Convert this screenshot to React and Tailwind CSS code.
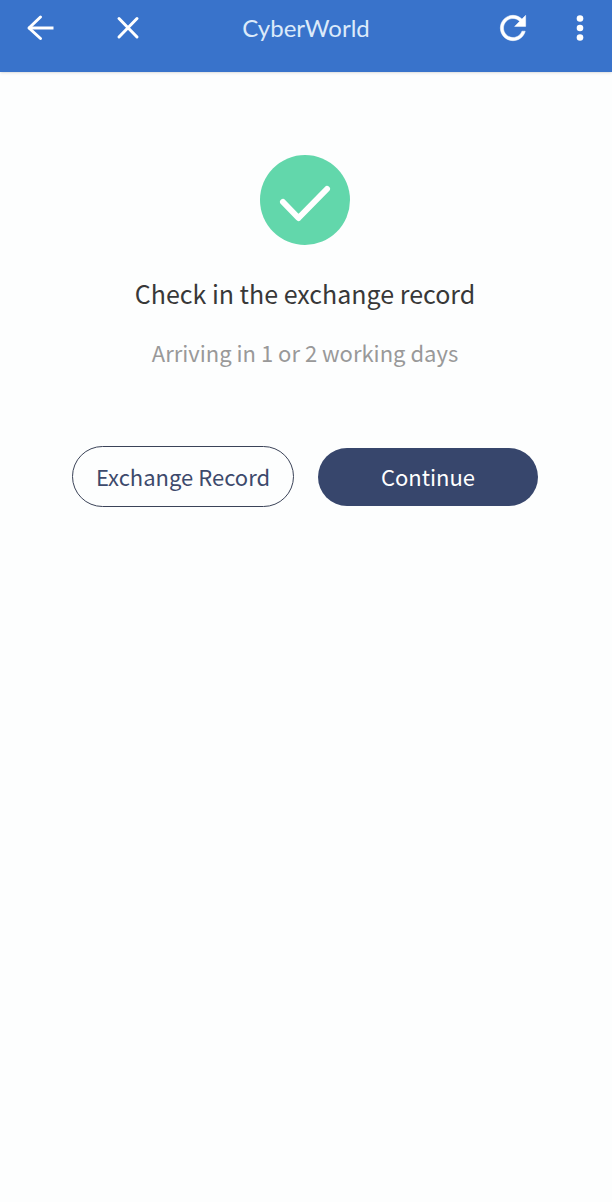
function BackIcon() {
  return (
    <svg viewBox="0 0 40 40" className="size-10" fill="none" stroke="currentColor" strokeWidth="3" strokeLinecap="round" strokeLinejoin="round" aria-hidden="true">
      <path d="M20.500 9L9 20l11.500 10.500" />
      <path d="M10 20h22" strokeLinecap="square" />
    </svg>
  );
}

function CloseIcon() {
  return (
    <svg viewBox="0 0 40 40" className="size-10" fill="none" stroke="currentColor" strokeWidth="3" strokeLinecap="round" aria-hidden="true">
      <path d="M11 10.500l18 18.500M29 10.500L11 29" />
    </svg>
  );
}

function RefreshIcon() {
  return (
    <svg viewBox="0 0 24 24" className="size-[38px]" fill="currentColor" aria-hidden="true">
      <path d="M17.650 6.350C16.200 4.900 14.210 4 12 4c-4.420 0-7.990 3.580-7.990 8s3.570 8 7.990 8c3.730 0 6.840-2.550 7.730-6h-2.080c-.82 2.330-3.040 4-5.650 4-3.310 0-6-2.690-6-6s2.690-6 6-6c1.660 0 3.140.69 4.220 1.780L13 11h7V4l-2.350 2.350z" stroke="currentColor" strokeWidth=".3" />
    </svg>
  );
}

function MoreIcon() {
  return (
    <svg viewBox="0 0 40 40" className="size-10" fill="currentColor" aria-hidden="true">
      <circle cx="20" cy="10.500" r="3.300" />
      <circle cx="20" cy="20" r="3.300" />
      <circle cx="20" cy="29.500" r="3.300" />
    </svg>
  );
}

function Header() {
  return (
    <header className="grid grid-cols-[1fr_auto_1fr] items-start bg-[#3973cb] px-3 pt-2 pb-6 text-white shadow">
      <div className="flex items-center gap-12 pl-2">
        <button type="button" aria-label="Back"><BackIcon /></button>
        <button type="button" aria-label="Close"><CloseIcon /></button>
      </div>
      <h1 className="font-[Lato,sans-serif] text-2xl leading-10 text-[#dceafa]">CyberWorld</h1>
      <div className="flex items-center justify-end gap-7">
        <button type="button" aria-label="Refresh"><RefreshIcon /></button>
        <button type="button" aria-label="More options"><MoreIcon /></button>
      </div>
    </header>
  );
}

export default function App() {
  return (
    <div className="min-h-screen bg-[#fdfefe] font-['Noto_Sans_CJK_SC',sans-serif]">
      <Header />
      <main className="flex flex-col items-center pr-[74px] pl-[72px] pt-[83px]">
        <svg viewBox="0 0 90 90" className="size-[90px]" aria-hidden="true">
          <circle cx="45" cy="45" r="45" fill="#62d7ab" />
          <path d="M23 47l15.500 16L67 34" fill="none" stroke="#fff" strokeWidth="6" strokeLinecap="round" strokeLinejoin="round" />
        </svg>
        <h2 className="mt-8 text-[25px] leading-8 text-[#383838]">Check in the exchange record</h2>
        <p className="mt-[27px] text-[22px] leading-8 text-[#999]">Arriving in 1 or 2 working days</p>
        <div className="mt-[78px] flex w-full items-center gap-6">
          <button type="button" className="h-[61px] flex-1 rounded-full border border-[#3b4358] text-[22px] text-[#3d4a6c]">Exchange Record</button>
          <button type="button" className="h-[58px] flex-1 rounded-full bg-[#37466c] text-[22px] text-white">Continue</button>
        </div>
      </main>
    </div>
  );
}
